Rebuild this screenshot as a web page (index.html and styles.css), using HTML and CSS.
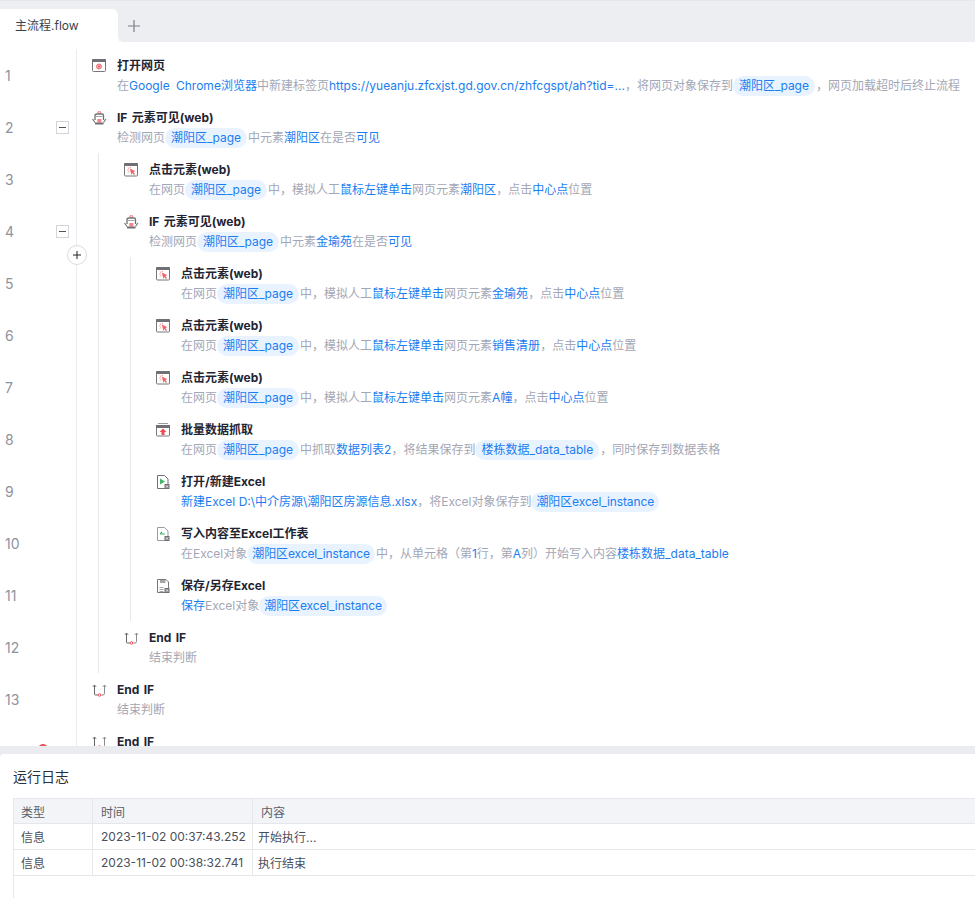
FILE: index.html
```html
<!DOCTYPE html>
<html lang="zh-CN">
<head>
    <meta charset="UTF-8">
    <title>主流程.flow</title>
    <link rel="stylesheet" href="styles.css">
</head>
<body>
    <svg class="sprites" width="0" height="0">
        <symbol id="i-open" viewBox="0 0 16 16">
            <rect x="1.500" y="0.500" width="13" height="12" rx="1" fill="#fff" stroke="#77777c"/>
            <rect x="1" y="0" width="14" height="3" rx="1" fill="#6f6f75"/>
            <circle cx="8" cy="7.500" r="2.500" fill="#f9b4b4" stroke="#ee6a70"/>
            <circle cx="8" cy="7.500" r="1" fill="#e8535a"/>
        </symbol>
        <symbol id="i-if" viewBox="0 0 16 16">
            <circle cx="8.300" cy="1.300" r="1.200" fill="#fff" stroke="#ee6a70"/>
            <path d="M4 9V4.500Q4 3 5.500 3H11Q12.500 3 12.500 4.500V9" fill="none" stroke="#6f6f75" stroke-width="1.300"/>
            <path d="M5 5.500H11.500" stroke="#a5a5aa"/>
            <rect x="6.300" y="8" width="4" height="3.500" fill="#f2858a"/>
            <path d="M1.500 8L4 11.500M15 8L12.500 11.500" fill="none" stroke="#77777c" stroke-width="1.200"/>
            <rect x="4" y="11.500" width="8.500" height="2" fill="#6f6f75"/>
        </symbol>
        <symbol id="i-click" viewBox="0 0 16 16">
            <rect x="1.500" y="0.500" width="13" height="12.500" rx="1" fill="#fff" stroke="#77777c"/>
            <rect x="1" y="0" width="14" height="3" rx="1" fill="#6f6f75"/>
            <path d="M6.800 5.500L12.500 8.200L10.300 9L12 11L11 12L9.200 10L8.400 12Z" fill="#f0636a"/>
            <path d="M4.800 4.500L6 5.700M4.300 7H5.600M7.300 4V5M4.800 9.500L5.800 8.700" stroke="#f0636a" fill="none" stroke-width=".8"/>
        </symbol>
        <symbol id="i-batch" viewBox="0 0 16 16">
            <rect x="1.500" y="2.500" width="13" height="10.500" rx="1" fill="#fff" stroke="#77777c"/>
            <path d="M3 .5H13" stroke="#9a9aa0"/>
            <rect x="1" y="2" width="14" height="3" fill="#6f6f75"/>
            <path d="M8 5.500L11.500 9H9.500V12H6.500V9H4.500Z" fill="#ee4d55"/>
        </symbol>
        <symbol id="i-xlopen" viewBox="0 0 16 16">
            <path d="M2.500 .5H9.500L13 4V13.500H2.500Z" fill="#fff" stroke="#6f6f75"/>
            <path d="M5 3.500L10 6.500L5 9.500Z" fill="#45b36b"/>
            <rect x="9.500" y="9" width="5" height="5" fill="#6f6f75"/>
            <path d="M10.800 10.300L13.200 12.700M13.200 10.300L10.800 12.700" stroke="#fff" stroke-width=".9"/>
        </symbol>
        <symbol id="i-xlwrite" viewBox="0 0 16 16">
            <path d="M2.500 .5H9.500L13 4V13.500H2.500Z" fill="#fff" stroke="#9a9aa0"/>
            <path d="M5 7H10M5 7L7 5" fill="none" stroke="#45b36b" stroke-width="1.100"/>
            <rect x="9.500" y="9" width="5" height="5" fill="#6f6f75"/>
            <path d="M10.800 10.300L13.200 12.700M13.200 10.300L10.800 12.700" stroke="#fff" stroke-width=".9"/>
        </symbol>
        <symbol id="i-xlsave" viewBox="0 0 16 16">
            <path d="M2.500 .5H11L13.500 3V13.500H2.500Z" fill="#fff" stroke="#77777c"/>
            <rect x="5" y="1" width="5.500" height="3" fill="#a5a5aa"/>
            <path d="M4.500 8.500H8.500M4.500 10.500H8.500M4.500 12.500H8.500" stroke="#9a9aa0" stroke-width=".9"/>
            <rect x="9.500" y="9" width="5" height="5" fill="#6f6f75"/>
            <path d="M10.800 10.300L13.200 12.700M13.200 10.300L10.800 12.700" stroke="#fff" stroke-width=".9"/>
        </symbol>
        <symbol id="i-end" viewBox="0 0 16 16">
            <path d="M3.500 2V11Q3.500 12 4.500 12H6.800M1.900 3.800L3.500 2L5.100 3.800" fill="none" stroke="#66666b"/>
            <path d="M13.500 2V10.500Q13.500 12 12 12H10.300M11.900 3.800L13.500 2L15.100 3.800" fill="none" stroke="#8a8a8f"/>
            <circle cx="8.500" cy="12" r="1.300" fill="#fff" stroke="#ee4d55"/>
        </symbol>
    </svg>

    <div class="tabbar">
        <div class="tab">主流程.flow</div>
        <div class="tab-add">
            <svg width="12" height="12" viewBox="0 0 12 12"><path d="M6 0V12M0 6H12" stroke="#7a7e86" stroke-width="1.200"/></svg>
        </div>
    </div>

    <div class="editor">
        <div class="row">
            <div class="gutter"><span class="num">1</span></div>
            <div class="step">
                <svg class="icon"><use href="#i-open"/></svg>
                <div class="step-text">
                    <div class="title">打开网页</div>
                    <div class="desc">在<b class="app-name">Google Chrome浏览器</b>中新建标签页<b>https://yueanju.zfcxjst.gd.gov.cn/zhfcgspt/ah?tid=...</b>，将网页对象保存到<i>潮阳区_page</i>，网页加载超时后终止流程</div>
                </div>
            </div>
        </div>
        <div class="row">
            <div class="gutter"><span class="num">2</span><span class="fold"></span></div>
            <div class="step">
                <svg class="icon"><use href="#i-if"/></svg>
                <div class="step-text">
                    <div class="title">IF 元素可见(web)</div>
                    <div class="desc">检测网页<i>潮阳区_page</i>中元素<b>潮阳区</b>在是否<b>可见</b></div>
                </div>
            </div>
        </div>
        <div class="row">
            <div class="gutter"><span class="num">3</span></div>
            <span class="guide"></span>
            <div class="step">
                <svg class="icon"><use href="#i-click"/></svg>
                <div class="step-text">
                    <div class="title">点击元素(web)</div>
                    <div class="desc">在网页<i>潮阳区_page</i>中，模拟人工<b>鼠标左键单击</b>网页元素<b>潮阳区</b>，点击<b>中心点</b>位置</div>
                </div>
            </div>
        </div>
        <div class="row">
            <div class="gutter"><span class="num">4</span><span class="fold"></span></div>
            <span class="guide"></span>
            <div class="step">
                <svg class="icon"><use href="#i-if"/></svg>
                <div class="step-text">
                    <div class="title">IF 元素可见(web)</div>
                    <div class="desc">检测网页<i>潮阳区_page</i>中元素<b>金瑜苑</b>在是否<b>可见</b></div>
                </div>
            </div>
        </div>
        <div class="row">
            <div class="gutter"><span class="num">5</span></div>
            <span class="guide"></span><span class="guide"></span>
            <div class="step">
                <svg class="icon"><use href="#i-click"/></svg>
                <div class="step-text">
                    <div class="title">点击元素(web)</div>
                    <div class="desc">在网页<i>潮阳区_page</i>中，模拟人工<b>鼠标左键单击</b>网页元素<b>金瑜苑</b>，点击<b>中心点</b>位置</div>
                </div>
            </div>
        </div>
        <div class="row">
            <div class="gutter"><span class="num">6</span></div>
            <span class="guide"></span><span class="guide"></span>
            <div class="step">
                <svg class="icon"><use href="#i-click"/></svg>
                <div class="step-text">
                    <div class="title">点击元素(web)</div>
                    <div class="desc">在网页<i>潮阳区_page</i>中，模拟人工<b>鼠标左键单击</b>网页元素<b>销售清册</b>，点击<b>中心点</b>位置</div>
                </div>
            </div>
        </div>
        <div class="row">
            <div class="gutter"><span class="num">7</span></div>
            <span class="guide"></span><span class="guide"></span>
            <div class="step">
                <svg class="icon"><use href="#i-click"/></svg>
                <div class="step-text">
                    <div class="title">点击元素(web)</div>
                    <div class="desc">在网页<i>潮阳区_page</i>中，模拟人工<b>鼠标左键单击</b>网页元素<b>A幢</b>，点击<b>中心点</b>位置</div>
                </div>
            </div>
        </div>
        <div class="row">
            <div class="gutter"><span class="num">8</span></div>
            <span class="guide"></span><span class="guide"></span>
            <div class="step">
                <svg class="icon"><use href="#i-batch"/></svg>
                <div class="step-text">
                    <div class="title">批量数据抓取</div>
                    <div class="desc">在网页<i>潮阳区_page</i>中抓取<b>数据列表2</b>，将结果保存到<i>楼栋数据_data_table</i>，同时保存到数据表格</div>
                </div>
            </div>
        </div>
        <div class="row">
            <div class="gutter"><span class="num">9</span></div>
            <span class="guide"></span><span class="guide"></span>
            <div class="step">
                <svg class="icon"><use href="#i-xlopen"/></svg>
                <div class="step-text">
                    <div class="title">打开/新建Excel</div>
                    <div class="desc"><b>新建Excel D:\中介房源\潮阳区房源信息.xlsx</b>，将Excel对象保存到<i class="pill-xl">潮阳区excel_instance</i></div>
                </div>
            </div>
        </div>
        <div class="row">
            <div class="gutter"><span class="num">10</span></div>
            <span class="guide"></span><span class="guide"></span>
            <div class="step">
                <svg class="icon"><use href="#i-xlwrite"/></svg>
                <div class="step-text">
                    <div class="title">写入内容至Excel工作表</div>
                    <div class="desc">在Excel对象<i class="pill-xl">潮阳区excel_instance</i>中，从单元格（第<b>1</b>行，第<b>A</b>列）开始写入内容<b>楼栋数据_data_table</b></div>
                </div>
            </div>
        </div>
        <div class="row">
            <div class="gutter"><span class="num">11</span></div>
            <span class="guide"></span><span class="guide"></span>
            <div class="step">
                <svg class="icon"><use href="#i-xlsave"/></svg>
                <div class="step-text">
                    <div class="title">保存/另存Excel</div>
                    <div class="desc"><b>保存</b>Excel对象<i class="pill-xl">潮阳区excel_instance</i></div>
                </div>
            </div>
        </div>
        <div class="row">
            <div class="gutter"><span class="num">12</span></div>
            <span class="guide"></span>
            <div class="step">
                <svg class="icon"><use href="#i-end"/></svg>
                <div class="step-text">
                    <div class="title">End IF</div>
                    <div class="desc">结束判断</div>
                </div>
            </div>
        </div>
        <div class="row">
            <div class="gutter"><span class="num">13</span></div>
            <div class="step">
                <svg class="icon"><use href="#i-end"/></svg>
                <div class="step-text">
                    <div class="title">End IF</div>
                    <div class="desc">结束判断</div>
                </div>
            </div>
        </div>
        <div class="row">
            <div class="gutter"><span class="breakpoint"></span></div>
            <div class="step">
                <svg class="icon"><use href="#i-end"/></svg>
                <div class="step-text">
                    <div class="title">End IF</div>
                </div>
            </div>
        </div>
        <button class="add-step">
            <svg width="8" height="8" viewBox="0 0 8 8"><path d="M4 0V8M0 4H8" stroke="#222" stroke-width="1"/></svg>
        </button>
    </div>

    <div class="log">
        <div class="log-title">运行日志</div>
        <div class="log-body">
            <table class="log-table">
                <colgroup>
                    <col class="col-type"><col class="col-time"><col>
                </colgroup>
                <thead>
                    <tr><th>类型</th><th>时间</th><th>内容</th></tr>
                </thead>
                <tbody>
                    <tr><td>信息</td><td>2023-11-02 00:37:43.252</td><td>开始执行...</td></tr>
                    <tr><td>信息</td><td>2023-11-02 00:38:32.741</td><td>执行结束</td></tr>
                </tbody>
            </table>
        </div>
    </div>
</body>
</html>
```

FILE: styles.css
```css
* {
    box-sizing: border-box;
}
html, body {
    height: 100%;
}
body {
    margin: 0;
    display: flex;
    flex-direction: column;
    overflow: hidden;
    background-color: #ebecf0;
    font-family: "Inter", "Noto Sans CJK SC", sans-serif;
    font-size: 12px;
    color: #1f2533;
}
.sprites {
    position: absolute;
}

/* tabs */
.tabbar {
    height: 42px;
    flex: none;
    display: flex;
    align-items: flex-end;
    background-color: #eceef2;
    border-top: 1px solid #e6e7eb;
}
.tab {
    position: relative;
    width: 118px;
    height: 33px;
    padding-left: 15px;
    line-height: 33px;
    color: #3a3f4b;
    background-color: #fff;
    border-top-right-radius: 6px;
}
.tab::after {
    content: "";
    position: absolute;
    right: -5px;
    bottom: 0;
    width: 5px;
    height: 5px;
    background: radial-gradient(circle at 100% 0, transparent 5px, #fff 5px);
}
.tab-add {
    height: 33px;
    padding-left: 10px;
    display: flex;
    align-items: center;
}

/* flow steps */
.editor {
    position: relative;
    height: 704px;
    flex: none;
    padding-top: 7px;
    overflow: hidden;
    background-color: #fff;
}
.row {
    height: 52px;
    display: flex;
}
.gutter {
    position: relative;
    width: 77px;
    flex: none;
    display: flex;
    align-items: center;
    padding-left: 5px;
    padding-right: 7px;
    border-right: 1px solid #ebecef;
}
.num {
    flex: 1;
    font-size: 14px;
    color: #8f939e;
}
.fold {
    position: relative;
    width: 13px;
    height: 13px;
    border: 1px solid #d3d5da;
    background-color: #fff;
}
.fold::before {
    content: "";
    position: absolute;
    left: 2px;
    right: 2px;
    top: 5px;
    height: 1px;
    background-color: #555;
}
.breakpoint {
    position: absolute;
    left: 38px;
    top: 19px;
    width: 10px;
    height: 10px;
    border-radius: 50%;
    background-color: #e8535a;
}
.guide {
    width: 11px;
    margin-left: 21px;
    flex: none;
    border-left: 1px solid #e6e7eb;
}
.step {
    display: flex;
    padding-left: 14px;
    padding-top: 7px;
}
.icon {
    width: 16px;
    height: 16px;
    margin-top: 3px;
    flex: none;
}
.step-text {
    margin-left: 10px;
    white-space: nowrap;
}
.title {
    font-weight: 700;
    line-height: 20px;
    word-spacing: 1.500px;
    color: #1f2533;
}
.desc {
    line-height: 20px;
    color: #a3a7b5;
}
.desc b {
    font-weight: 400;
    color: #1a7df0;
}
.desc .app-name {
    word-spacing: 3px;
}
.desc i {
    display: inline-block;
    height: 20px;
    padding: 0 6px;
    margin: 0 1px 0 0;
    font-style: normal;
    color: #1a7df0;
    background-color: #e9f3ff;
    border-radius: 10px;
}
.desc .pill-xl {
    padding: 0 5px;
    letter-spacing: -.12px;
}
.add-step {
    position: absolute;
    left: 67px;
    top: 203px;
    width: 20px;
    height: 20px;
    padding: 0;
    display: flex;
    align-items: center;
    justify-content: center;
    background-color: #fff;
    border: 1px solid #d9dbe0;
    border-radius: 50%;
}

/* run log */
.log {
    flex: 1;
    display: flex;
    flex-direction: column;
    margin-top: 8px;
    padding: 12px 0 0 13px;
    background-color: #fff;
    border-top-left-radius: 4px;
}
.log-title {
    height: 32px;
    font-size: 14px;
    line-height: 22px;
    color: #2a2f3a;
}
.log-body {
    flex: 1;
    border-left: 1px solid #e6e7eb;
}
.log-table {
    width: 962px;
    table-layout: fixed;
    border-collapse: separate;
    border-spacing: 0;
    color: #4a4f5b;
}
.col-type {
    width: 79px;
}
.col-time {
    width: 160px;
}
.log-table th,
.log-table td {
    height: 26px;
    padding: 0 4px 0 8px;
    text-align: left;
    font-weight: 400;
    border-bottom: 1px solid #e6e7eb;
    border-right: 1px solid #e6e7eb;
}
.log-table th {
    background-color: #f3f4f7;
    border-top: 1px solid #e6e7eb;
    color: #5a5f6b;
}
.log-table th:first-child,
.log-table td:first-child {
    padding-left: 7px;
}
.log-table td:last-child {
    padding-left: 5px;
    border-right: none;
}
.log-table th:last-child {
    border-right: none;
}
```
